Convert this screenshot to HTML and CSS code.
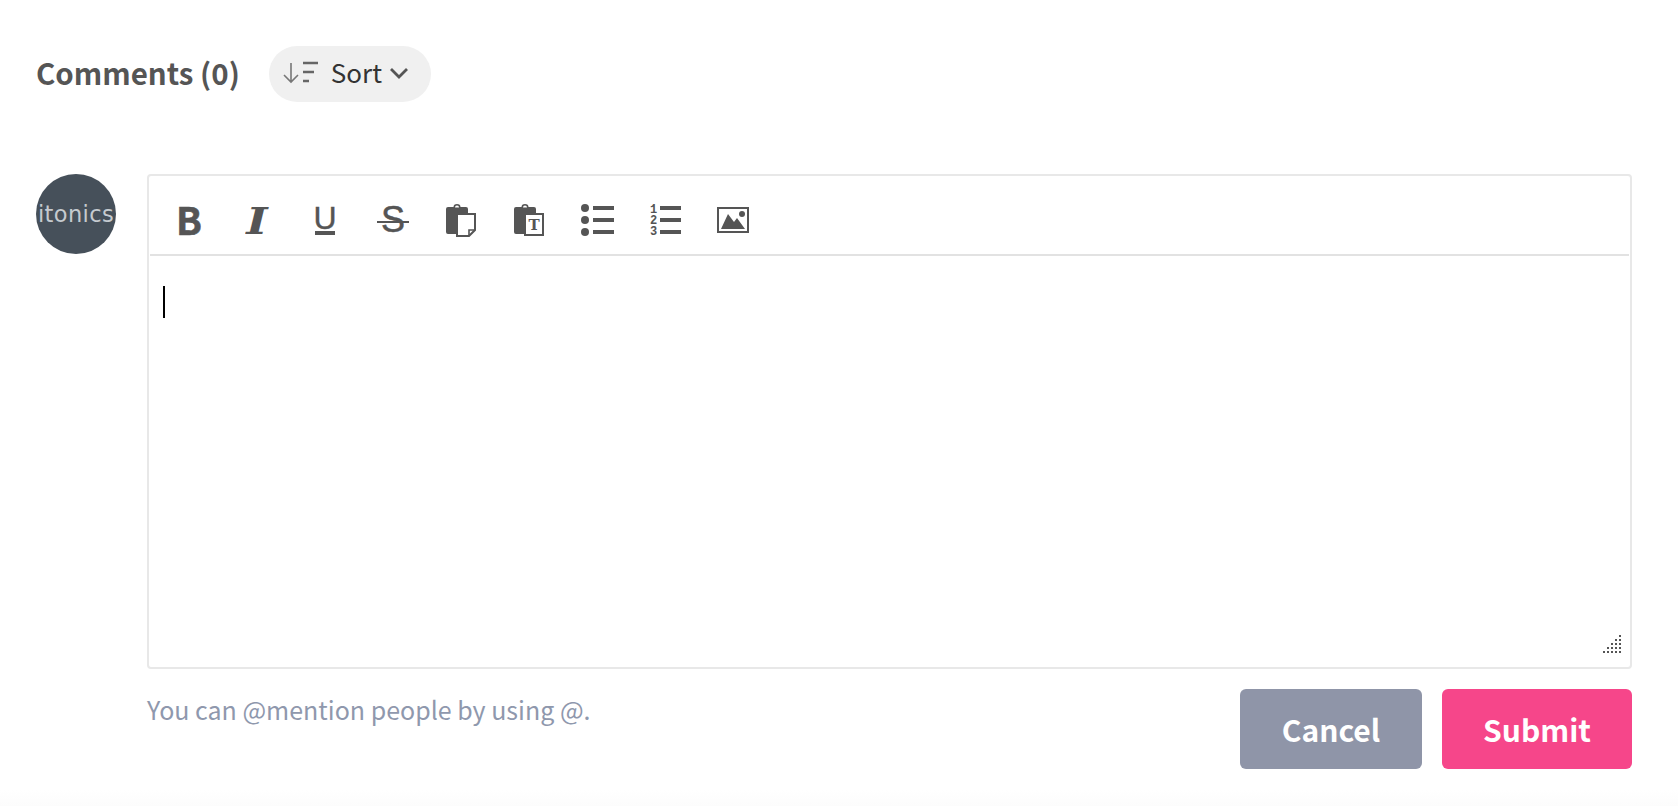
FILE: index.html
```html
<!DOCTYPE html>
<html lang="en">
<head>
    <meta charset="UTF-8">
    <meta name="viewport" content="width=device-width, initial-scale=1.0">
    <title>Comments</title>
    <link rel="stylesheet" href="styles.css">
</head>
<body>

    <section class="comments">

        <!-- Heading and sort -->
        <div class="comments-head">
            <h2 class="comments-title">Comments (0)</h2>
            <button class="sort-btn">
                <svg class="sort-icon" width="36" height="24" viewBox="0 0 36 24">
                    <path d="M8 2V21M1 14l7 7 7-7" fill="none" stroke="#777" stroke-width="1.6"/>
                    <path d="M20 2h15M20 11h11M20 20h6" fill="none" stroke="#666" stroke-width="2.6"/>
                </svg>
                <span class="sort-label">Sort</span>
                <svg class="sort-chevron" width="20" height="12" viewBox="0 0 20 12">
                    <path d="M2 2l8 8 8-8" fill="none" stroke="#555" stroke-width="2.8"/>
                </svg>
            </button>
        </div>

        <div class="comment-form">
            <div class="avatar"><span>itonics</span></div>

            <div class="comment-main">
                <div class="editor">
                    <div class="toolbar">
                        <button class="tool tool-bold"><span>B</span></button>
                        <button class="tool tool-italic"><span>I</span></button>
                        <button class="tool tool-underline"><span>U</span></button>
                        <button class="tool tool-strike"><span>S</span></button>

                        <button class="tool">
                            <svg width="32" height="34" viewBox="0 0 32 34">
                                <path d="M3 4h5.500a3.500 3 0 0 1 7 0H21a2 2 0 0 1 2 2v25H3a2 2 0 0 1-2-2V6a2 2 0 0 1 2-2zM10 4.500h4a2 2 0 0 0-4 0z" fill="#555" fill-rule="evenodd"/>
                                <path d="M12 11h18v16l-6 6H12z" fill="#fff" stroke="#555" stroke-width="2"/>
                                <path d="M24 33v-6h6" fill="none" stroke="#555" stroke-width="1.600"/>
                            </svg>
                        </button>
                        <button class="tool">
                            <svg width="32" height="34" viewBox="0 0 32 34">
                                <path d="M3 4h5.500a3.500 3 0 0 1 7 0H21a2 2 0 0 1 2 2v25H3a2 2 0 0 1-2-2V6a2 2 0 0 1 2-2zM10 4.500h4a2 2 0 0 0-4 0z" fill="#555" fill-rule="evenodd"/>
                                <rect x="12" y="11" width="18" height="21" fill="#fff" stroke="#555" stroke-width="2"/>
                                <text x="21" y="27" class="icon-t">T</text>
                            </svg>
                        </button>
                        <button class="tool">
                            <svg width="34" height="32" viewBox="0 0 34 32">
                                <circle cx="5" cy="4" r="4" fill="#555"/>
                                <circle cx="5" cy="16" r="4" fill="#555"/>
                                <circle cx="5" cy="28" r="4" fill="#555"/>
                                <path d="M13 4h21M13 16h21M13 28h21" stroke="#555" stroke-width="4"/>
                            </svg>
                        </button>
                        <button class="tool">
                            <svg width="32" height="40" viewBox="0 0 32 40">
                                <text x="1" y="13" class="icon-num">1</text>
                                <text x="1" y="24" class="icon-num">2</text>
                                <text x="1" y="35" class="icon-num">3</text>
                                <path d="M11 8h21M11 20h21M11 32h21" stroke="#555" stroke-width="4"/>
                            </svg>
                        </button>
                        <button class="tool">
                            <svg width="32" height="26" viewBox="0 0 32 26">
                                <rect x="1" y="1" width="30" height="24" fill="#fff" stroke="#555" stroke-width="2"/>
                                <path d="M4 22l7-15 6 8 3-4 8 11z" fill="#555"/>
                                <circle cx="25" cy="7" r="3" fill="#555"/>
                            </svg>
                        </button>
                    </div>

                    <div class="editor-body">
                        <span class="caret"></span>
                        <svg class="resize-grip" width="20" height="20" viewBox="0 0 20 20">
                            <path fill="#555" d="M17 0h2v2h-2zM13 4h2v2h-2zM17 4h2v2h-2zM9 8h2v2H9zM13 8h2v2h-2zM17 8h2v2h-2zM5 12h2v2H5zM9 12h2v2H9zM13 12h2v2h-2zM17 12h2v2h-2zM1 16h2v2H1zM5 16h2v2H5zM9 16h2v2H9zM13 16h2v2h-2zM17 16h2v2h-2z"/>
                        </svg>
                    </div>
                </div>

                <div class="comment-foot">
                    <p class="hint">You can @mention people by using @.</p>
                    <div class="actions">
                        <button class="btn btn-cancel">Cancel</button>
                        <button class="btn btn-submit">Submit</button>
                    </div>
                </div>
            </div>
        </div>

    </section>

</body>
</html>
```

FILE: styles.css
```css
* {
    box-sizing: border-box;
}

html, body {
    height: 100%;
}

body {
    margin: 0;
    background: linear-gradient(#fff 790px, #fcfcfc);
    font-family: "Noto Sans CJK SC", "Source Sans Pro", "Noto Sans", sans-serif;
    overflow: hidden;
}

button {
    font-family: inherit;
    border: none;
    background: none;
    padding: 0;
}

.comments {
    padding: 46px 46px 0 36px;
}

/* Heading */
.comments-head {
    display: flex;
    align-items: center;
    gap: 29px;
    height: 56px;
    margin-bottom: 72px;
}

.comments-title {
    margin: 0 0 4px;
    font-size: 29.5px;
    font-weight: 700;
    color: #555;
}

.sort-btn {
    display: flex;
    align-items: center;
    width: 162px;
    height: 56px;
    padding: 0 0 2px 14px;
    border-radius: 28px;
    background-color: #f0f0f0;
    font-size: 26px;
    color: #333;
}

.sort-icon {
    margin-right: 12px;
}

.sort-label {
    margin-bottom: 4px;
}

.sort-chevron {
    margin-left: 7px;
}

/* Form */
.comment-form {
    display: flex;
    gap: 31px;
}

.avatar {
    flex: none;
    display: flex;
    align-items: center;
    justify-content: center;
    width: 80px;
    height: 80px;
    border-radius: 50%;
    background-color: #46505a;
    font-family: "DejaVu Sans", sans-serif;
    font-size: 22.5px;
    letter-spacing: 0.4px;
    color: #c5cacf;
}

.comment-main {
    flex: 1;
}

/* Editor */
.editor {
    height: 495px;
    border: 2px solid #e8e8e8;
    border-radius: 4px;
    display: flex;
    flex-direction: column;
}

.toolbar {
    display: flex;
    align-items: center;
    height: 80px;
    margin: 0 1px;
    padding: 10px 0 0 5px;
    border-bottom: 2px solid #e2e2e2;
}

.tool {
    display: flex;
    align-items: center;
    justify-content: center;
    width: 68px;
    height: 40px;
    color: #555;
}

.tool-bold span {
    margin-bottom: 4px;
    font-size: 38px;
    font-weight: 700;
    -webkit-text-stroke: 0.6px #555;
}

.tool-italic span {
    display: block;
    font-family: "DejaVu Serif", serif;
    font-size: 38px;
    font-weight: 700;
    font-style: italic;
    transform: scaleX(1.2);
}

.tool-underline span {
    display: flex;
    justify-content: center;
    width: 20px;
    font-family: "Liberation Sans", sans-serif;
    font-size: 32px;
    line-height: 25px;
    border-bottom: 4px solid #555;
    -webkit-text-stroke: 0.4px #555;
}

.tool-strike span {
    position: relative;
    font-family: "Liberation Sans", sans-serif;
    font-size: 36px;
    -webkit-text-stroke: 0.5px #555;
}

/* the strike line runs past the letter on both sides */
.tool-strike span::after {
    content: "";
    position: absolute;
    left: -4px;
    right: -4px;
    top: 52%;
    height: 2px;
    background-color: #555;
}

.icon-t {
    font-family: "DejaVu Serif", serif;
    font-size: 15px;
    font-weight: 700;
    text-anchor: middle;
    fill: #555;
}

.icon-num {
    font-family: "Liberation Mono", monospace;
    font-size: 12px;
    font-weight: 700;
    fill: #555;
}

.editor-body {
    flex: 1;
    position: relative;
    padding: 30px 14px;
}

.caret {
    display: block;
    width: 2px;
    height: 32px;
    background-color: #000;
}

.resize-grip {
    position: absolute;
    right: 8px;
    bottom: 12px;
}

/* Footer */
.comment-foot {
    display: flex;
    justify-content: space-between;
    margin-top: 20px;
}

.hint {
    margin: 2px 0 0;
    font-size: 25px;
    color: #8f98ad;
}

.actions {
    display: flex;
    gap: 20px;
}

.btn {
    height: 80px;
    border-radius: 6px;
    font-size: 30px;
    font-weight: 700;
    color: #fff;
}

.btn-cancel {
    width: 182px;
    background-color: #8f95a8;
}

.btn-submit {
    width: 190px;
    background-color: #f6468a;
}
```
